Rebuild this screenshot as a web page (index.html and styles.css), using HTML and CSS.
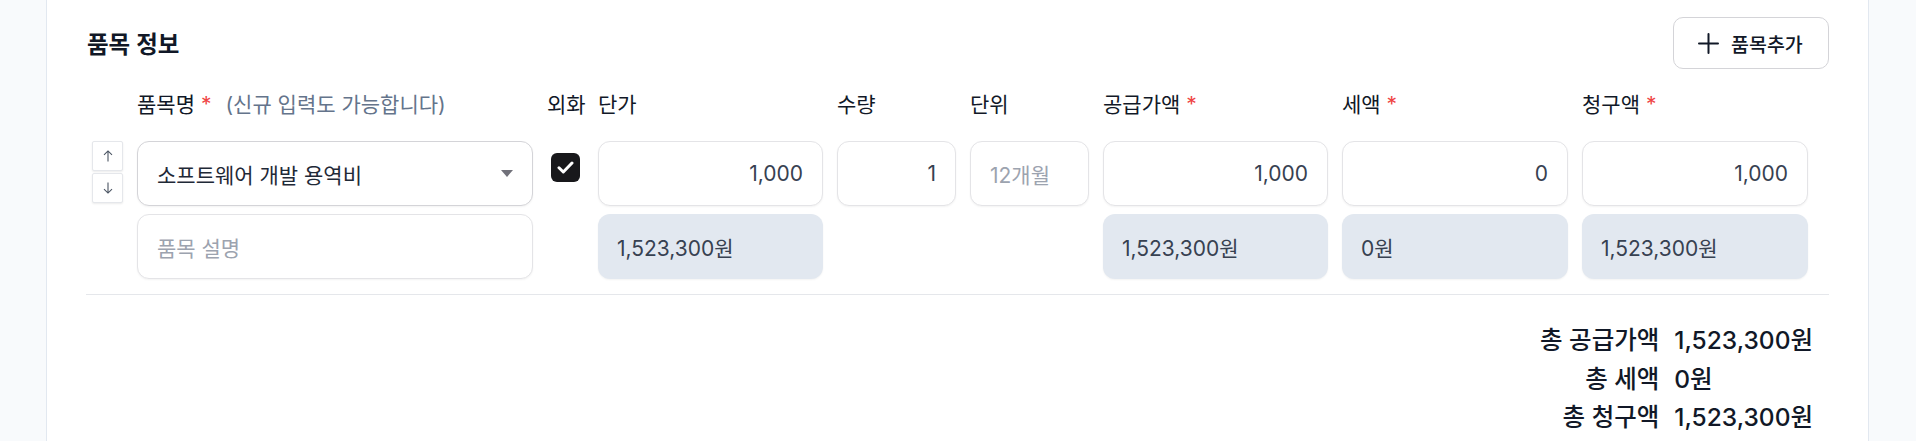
FILE: index.html
```html
<!DOCTYPE html>
<html lang="ko">
<head>
<meta charset="utf-8">
<title>품목 정보</title>
<link rel="stylesheet" href="styles.css">
</head>
<body>
<section class="card">
  <header class="card-head">
    <h2 class="title">품목 정보</h2>
    <button class="add-btn" type="button">
      <svg class="plus" width="21" height="21" viewBox="0 0 21 21" aria-hidden="true"><path d="M10.5 1v19M1 10.5h19" stroke="#111827" stroke-width="2" fill="none" stroke-linecap="round"/></svg>
      <span>품목추가</span>
    </button>
  </header>

  <div class="grid labels">
    <div></div>
    <div class="lbl">품목명 <span class="req">*</span><span class="hint">(신규 입력도 가능합니다)</span></div>
    <div class="lbl">외화</div>
    <div class="lbl">단가</div>
    <div class="lbl">수량</div>
    <div class="lbl">단위</div>
    <div class="lbl">공급가액 <span class="req">*</span></div>
    <div class="lbl">세액 <span class="req">*</span></div>
    <div class="lbl">청구액 <span class="req">*</span></div>
  </div>

  <div class="grid item">
    <div class="move">
      <button class="mv" type="button" aria-label="위로"><svg width="10" height="12" viewBox="0 0 10 12"><path d="M5 11.5V1M1 4.8L5 0.9l4 3.9" stroke="#4b5563" stroke-width="1.1" fill="none"/></svg></button>
      <button class="mv" type="button" aria-label="아래로"><svg width="10" height="12" viewBox="0 0 10 12"><path d="M5 0.5V11M1 7.2l4 3.9 4-3.9" stroke="#4b5563" stroke-width="1.1" fill="none"/></svg></button>
    </div>
    <div class="field select"><span>소프트웨어 개발 용역비</span><svg class="caret" width="12" height="7" viewBox="0 0 12 7"><path d="M0 0h12L6 7z" fill="#71717a"/></svg></div>
    <div class="chk-cell"><span class="chk"><svg width="17" height="13" viewBox="0 0 17 13"><path d="M2 6.8l4.3 4.2L15 2" stroke="#fff" stroke-width="3" fill="none" stroke-linecap="round" stroke-linejoin="round"/></svg></span></div>
    <div class="field num">1,000</div>
    <div class="field num">1</div>
    <div class="field ph">12개월</div>
    <div class="field num">1,000</div>
    <div class="field num">0</div>
    <div class="field num">1,000</div>

    <div></div>
    <div class="field ph desc">품목 설명</div>
    <div></div>
    <div class="calc">1,523,300원</div>
    <div></div>
    <div></div>
    <div class="calc">1,523,300원</div>
    <div class="calc">0원</div>
    <div class="calc">1,523,300원</div>
  </div>

  <hr class="divider">

  <div class="summary">
    <div class="sum-grid">
      <span class="k">총 공급가액</span><span class="v">1,523,300원</span>
      <span class="k">총 세액</span><span class="v">0원</span>
      <span class="k">총 청구액</span><span class="v">1,523,300원</span>
    </div>
  </div>
</section>
</body>
</html>
```

FILE: styles.css
```css
html, body {
  margin: 0;
  padding: 0;
}

body {
  background: #f8fafc;
  font-family: Inter, "Noto Sans CJK KR", sans-serif;
  color: #111827;
}

.card {
  box-sizing: border-box;
  margin: 0 47px 0 46px;
  min-height: 441px;
  padding: 17px 39px 0 39px;
  background: #ffffff;
  border-left: 1px solid #e2e8f0;
  border-right: 1px solid #e2e8f0;
}

.card-head {
  display: flex;
  align-items: center;
  justify-content: space-between;
  height: 52px;
}

.title {
  margin: 0;
  padding-left: 1px;
  font-size: 23.5px;
  font-weight: 600;
  color: #111827;
}

.add-btn {
  box-sizing: border-box;
  display: flex;
  align-items: center;
  gap: 12px;
  height: 52px;
  width: 156px;
  padding: 0 16px 0 24px;
  background: #ffffff;
  border: 1px solid #d4d4d8;
  border-radius: 10px;
  font-family: inherit;
  font-size: 19.5px;
  font-weight: 500;
  color: #111827;
  white-space: nowrap;
}

.grid {
  display: grid;
  grid-template-columns: 31px 396px 37px 225px 119px 119px 225px 226px 226px;
  column-gap: 14px;
  padding-left: 6px;
}

.labels {
  margin-top: 23px;
  height: 26px;
  line-height: 26px;
  font-size: 21px;
  font-weight: 400;
  color: #111827;
  white-space: nowrap;
}

.req {
  color: #ef4444;
}

.hint {
  margin-left: 14px;
  color: #64748b;
}

.item {
  margin-top: 23px;
  grid-template-rows: 65px 65px;
  row-gap: 8px;
}

.move {
  display: flex;
  flex-direction: column;
  gap: 2px;
}

.mv {
  box-sizing: border-box;
  display: flex;
  align-items: center;
  justify-content: center;
  width: 31px;
  height: 30px;
  padding: 0;
  background: #ffffff;
  border: 1px solid #e5e7eb;
  border-radius: 2px;
  box-shadow: 0 1px 2px rgba(0, 0, 0, 0.08);
}

.field {
  box-sizing: border-box;
  display: flex;
  align-items: center;
  padding: 0 19px;
  background: #ffffff;
  border: 1px solid #e4e4e7;
  border-radius: 12px;
  box-shadow: 0 1px 2px rgba(0, 0, 0, 0.05);
  font-size: 21px;
  color: #374151;
  white-space: nowrap;
}

.num {
  justify-content: flex-end;
}

.ph {
  color: #9ca3af;
}

.select {
  justify-content: space-between;
  border-color: #d4d4d8;
  color: #1f2937;
}

.chk-cell {
  display: flex;
  justify-content: center;
  align-items: flex-start;
  padding-top: 12px;
}

.chk {
  display: flex;
  align-items: center;
  justify-content: center;
  width: 29px;
  height: 29px;
  background: #18181b;
  border-radius: 6px;
}

.calc {
  box-sizing: border-box;
  display: flex;
  align-items: center;
  padding: 0 19px;
  background: #e2e8f0;
  border-radius: 12px;
  box-shadow: 0 1px 2px rgba(0, 0, 0, 0.05);
  font-size: 21px;
  color: #374151;
  white-space: nowrap;
}

.divider {
  margin: 15px 0 0;
  border: 0;
  border-top: 1px solid #e5e7eb;
}

.summary {
  display: flex;
  justify-content: flex-end;
  padding: 26px 16px 0 0;
}

.sum-grid {
  display: grid;
  grid-template-columns: auto auto;
  column-gap: 15px;
  font-size: 24.5px;
  font-weight: 500;
  line-height: 38.5px;
  color: #111827;
}

.k {
  text-align: right;
}
```
